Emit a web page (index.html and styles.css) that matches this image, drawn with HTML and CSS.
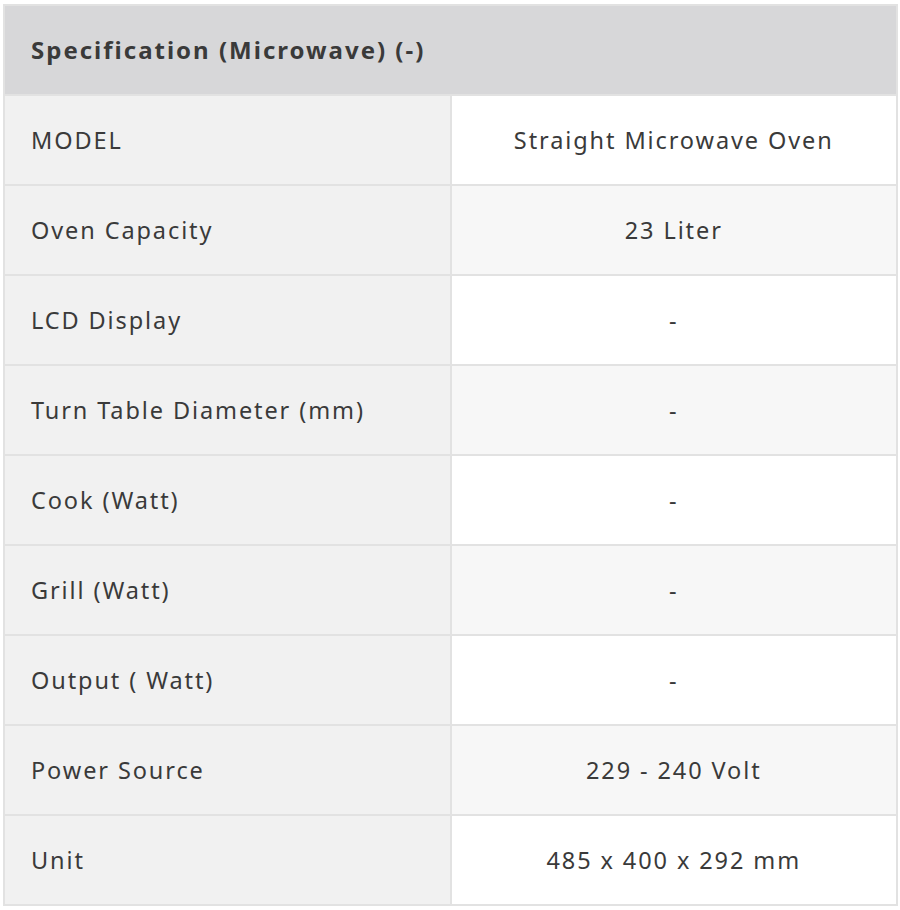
FILE: index.html
```html
<!DOCTYPE html>
<html>
<head>
<meta charset="utf-8">
<link rel="stylesheet" href="styles.css">
</head>
<body>
<div class="wrap">
<table class="spec">
  <thead>
    <tr><th colspan="2">Specification (Microwave) (-)</th></tr>
  </thead>
  <tbody>
    <tr><td class="k">MODEL</td><td class="v">Straight Microwave Oven</td></tr>
    <tr><td class="k">Oven Capacity</td><td class="v">23 Liter</td></tr>
    <tr><td class="k">LCD Display</td><td class="v">-</td></tr>
    <tr><td class="k">Turn Table Diameter (mm)</td><td class="v">-</td></tr>
    <tr><td class="k">Cook (Watt)</td><td class="v">-</td></tr>
    <tr><td class="k">Grill (Watt)</td><td class="v">-</td></tr>
    <tr><td class="k">Output ( Watt)</td><td class="v">-</td></tr>
    <tr><td class="k">Power Source</td><td class="v">229 - 240 Volt</td></tr>
    <tr><td class="k">Unit</td><td class="v">485 x 400 x 292 mm</td></tr>
  </tbody>
</table>
</div>
</body>
</html>
```
FILE: styles.css
```css
html, body { margin: 0; padding: 0; background: #fff; }
.wrap { padding: 4px 2px 0 3px; }
.spec {
  width: 895px;
  border-collapse: collapse;
  border: 2px solid #e2e2e2;
  font-family: "Noto Sans", "Open Sans", sans-serif;
  color: #3a3a3a;
  font-size: 23.5px;
  letter-spacing: 1.9px;
  table-layout: fixed;
}
.spec th {
  background: #d7d7d9;
  text-align: left;
  font-weight: 700;
  font-size: 24px;
  height: 90px;
  padding: 0 0 2px 26px;
  box-sizing: border-box;
  border: 2px solid #e2e2e2;
  letter-spacing: 2px;
}
.spec td {
  height: 90px;
  box-sizing: border-box;
  border: 2px solid #e2e2e2;
  padding: 0;
  vertical-align: middle;
}
.spec td.k {
  background: #f1f1f1;
  padding-left: 26px;
  width: 447px;
}
.spec td.v {
  background: #fff;
  text-align: center;
}
.spec tbody tr:nth-child(even) td.v { background: #f7f7f7; }
```
